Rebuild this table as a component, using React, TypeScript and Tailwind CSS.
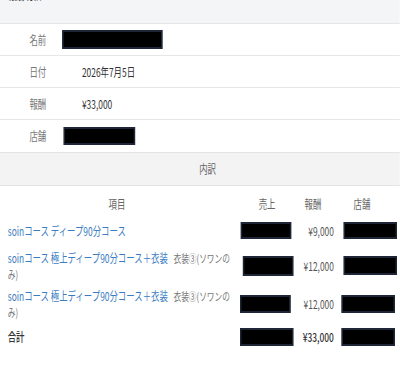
import React from 'react';

const Redact: React.FC<{ className?: string }> = ({ className }) => (
  <div className={`bg-black border-2 border-[#1d2536] ${className ?? ''}`} />
);

interface Item {
  name: string;
  note?: string;
  reward: string;
  h: string;
  salesBox: string;
  storeBox: string;
}

const items: Item[] = [
  { name: 'soinコース ディープ90分コース', reward: '¥9,000', h: 'h-[33px]', salesBox: 'ml-[4px] h-[17px]', storeBox: 'ml-[5px] h-[17px]' },
  { name: 'soinコース 極上ディープ90分コース＋衣装', note: '衣装③(ソワンのみ)', reward: '¥12,000', h: 'h-[37px]', salesBox: 'ml-[7px] h-[20px]', storeBox: 'ml-[5px] h-[19px]' },
  { name: 'soinコース 極上ディープ90分コース＋衣装', note: '衣装③(ソワンのみ)', reward: '¥12,000', h: 'h-[39px]', salesBox: 'ml-[3px] h-[18px]', storeBox: 'ml-[2px] h-[18px]' },
];

export default function App() {
  return (
    <div className="w-[400px] h-[365px] overflow-hidden bg-white">
      <div className="w-[571px] origin-top-left scale-x-[0.7] font-['Noto_Sans_CJK_JP','Noto_Sans',sans-serif] text-[12px] text-[#333]">
        {/* top band */}
        <div className="h-[23px] bg-[#f4f5f7] overflow-hidden">
          <div className="-mt-[14px] pl-[11px] text-[12px] font-medium text-[#333]">報酬明細</div>
        </div>

        {/* info rows */}
        <div className="flex h-[32px] items-center border-t border-[#e6e6e6]">
          <div className="w-[66px] text-right text-[#777]">名前</div>
          <Redact className="ml-[23px] w-[143px] h-[19px]" />
        </div>
        <div className="flex h-[32px] items-center border-t border-[#e6e6e6]">
          <div className="w-[66px] text-right text-[#777]">日付</div>
          <div className="pl-[51px]">2026年7月5日</div>
        </div>
        <div className="flex h-[32px] items-center border-t border-[#e6e6e6]">
          <div className="w-[66px] text-right text-[#777]">報酬</div>
          <div className="pl-[51px]">¥33,000</div>
        </div>
        <div className="flex h-[33px] items-center border-t border-[#e6e6e6]">
          <div className="w-[66px] text-right text-[#777]">店舗</div>
          <Redact className="ml-[25px] w-[102px] h-[18px]" />
        </div>

        {/* breakdown header */}
        <div className="flex h-[34px] items-center justify-center border-y border-[#e4e4e4] bg-[#f3f3f3] pl-[22px] text-[#666]">
          内訳
        </div>

        {/* table header */}
        <div className="flex h-[28px] items-end pb-[1px] text-[#666]">
          <div className="w-[340px] pr-[6px] text-center">項目</div>
          <div className="w-[83px] text-center">売上</div>
          <div className="w-[63px] pr-[15px] text-center">報酬</div>
          <div className="w-[85px] pr-[23px] text-center">店舗</div>
        </div>

        {items.map((it, i) => (
          <div key={i} className={`flex items-center ${it.h}`}>
            <div className="w-[340px] pl-[11px] pr-[6px] leading-[15px]">
              <span className="text-[#3a7cc2]">{it.name}</span>
              {it.note && <span className="ml-[8px] text-[11px] text-[#777]">{it.note}</span>}
            </div>
            <div className="w-[83px]">
              <Redact className={`w-[72px] ${it.salesBox}`} />
            </div>
            <div className="w-[63px] pr-[9px] text-right text-[#555]">{it.reward}</div>
            <div className="w-[85px]">
              <Redact className={`w-[76px] ${it.storeBox}`} />
            </div>
          </div>
        ))}

        {/* total */}
        <div className="flex h-[28px] items-center">
          <div className="w-[340px] pl-[11px] font-medium">合計</div>
          <div className="w-[83px]">
            <Redact className="ml-[3px] w-[76px] h-[18px]" />
          </div>
          <div className="w-[63px] pr-[9px] text-right font-medium">¥33,000</div>
          <div className="w-[85px]">
            <Redact className="ml-[2px] w-[76px] h-[18px]" />
          </div>
        </div>
      </div>
    </div>
  );
}
